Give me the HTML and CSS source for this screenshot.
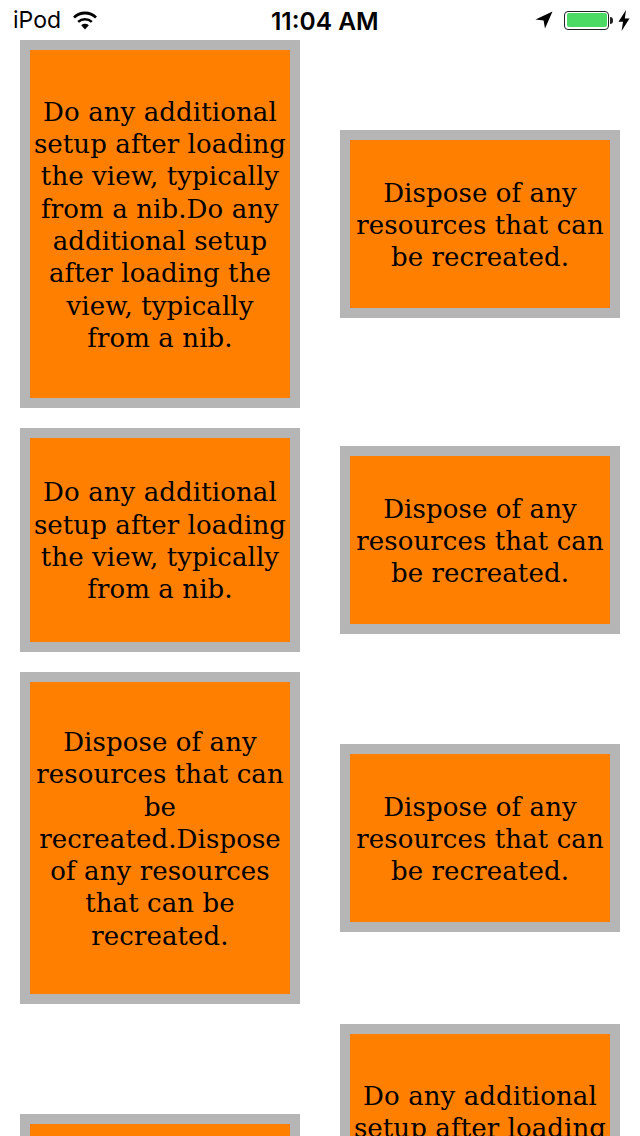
FILE: index.html
```html
<!DOCTYPE html>
<html lang="en">
<head>
    <meta charset="UTF-8">
    <title>Cards</title>
    <link rel="stylesheet" href="styles.css">
</head>
<body>
    <div class="status-bar">
        <div class="status-left">
            <span class="carrier">iPod</span>
            <svg class="wifi" width="26" height="19" viewBox="0 0 26 19">
                <path d="M13 18.5 L9.2 14.2 A5.6 5.6 0 0 1 16.8 14.2 Z" fill="#000"/>
                <path d="M6.2 10.9 A9.9 9.9 0 0 1 19.8 10.9" fill="none" stroke="#000" stroke-width="2.6"/>
                <path d="M2 6.4 A16 16 0 0 1 24 6.4" fill="none" stroke="#000" stroke-width="2.8"/>
            </svg>
        </div>
        <div class="status-time">11:04 AM</div>
        <div class="status-right">
            <svg class="location" width="18" height="18" viewBox="0 0 18 18">
                <path d="M17.5 0.5 L0.5 8.4 L8.6 9.4 L10 17.5 Z" fill="#000"/>
            </svg>
            <div class="battery"><div class="battery-level"></div></div>
            <div class="battery-tip"></div>
            <svg class="bolt" width="12" height="21" viewBox="0 0 12 21">
                <path d="M8 0 L0.5 11.8 H5 L3.6 21 L11.5 8.6 H6.8 Z" fill="#000"/>
            </svg>
        </div>
    </div>

    <div class="grid">
        <div class="card h-348">Do any additional<br>setup after loading<br>the view, typically<br>from a nib.Do any<br>additional setup<br>after loading the<br>view, typically<br>from a nib.</div>
        <div class="card h-168">Dispose of any<br>resources that can<br>be recreated.</div>

        <div class="card h-204">Do any additional<br>setup after loading<br>the view, typically<br>from a nib.</div>
        <div class="card h-168">Dispose of any<br>resources that can<br>be recreated.</div>

        <div class="card h-312">Dispose of any<br>resources that can<br>be<br>recreated.Dispose<br>of any resources<br>that can be<br>recreated.</div>
        <div class="card h-168">Dispose of any<br>resources that can<br>be recreated.</div>

        <div class="card h-168">Dispose of any<br>resources that can<br>be recreated.</div>
        <div class="card h-348">Do any additional<br>setup after loading<br>the view, typically<br>from a nib.Do any<br>additional setup<br>after loading the<br>view, typically<br>from a nib.</div>
    </div>
</body>
</html>
```

FILE: styles.css
```css
html, body {
    margin: 0;
    padding: 0;
    height: 1136px;
    overflow: hidden;
    background-color: white;
}
.status-bar {
    height: 40px;
    display: flex;
    align-items: center;
    justify-content: space-between;
    position: relative;
    padding: 0 10px 0 13px;
    box-sizing: border-box;
    font-family: Inter, "Liberation Sans", sans-serif;
    color: black;
}
.status-left {
    display: flex;
    align-items: center;
    gap: 11px;
}
.carrier {
    font-size: 23px;
}
.status-time {
    position: absolute;
    left: 271px;
    top: 7px;
    font-size: 24.5px;
    font-weight: 600;
    line-height: 28px;
}
.status-right {
    display: flex;
    align-items: center;
}
.location {
    margin-right: 11px;
}
.battery {
    width: 45px;
    height: 19px;
    box-sizing: border-box;
    border: 1.5px solid #222;
    border-radius: 4px;
    padding: 1.5px;
}
.battery-level {
    height: 100%;
    background-color: #4cd964;
    border-radius: 2px;
}
.battery-tip {
    width: 3px;
    height: 7px;
    margin-left: 1px;
    background-color: #222;
    border-radius: 0 3px 3px 0;
}
.bolt {
    margin-left: 5px;
}
.grid {
    display: grid;
    grid-template-columns: 280px 280px;
    column-gap: 40px;
    row-gap: 20px;
    padding: 0 20px;
    align-items: center;
}
.card {
    display: flex;
    align-items: center;
    justify-content: center;
    text-align: center;
    box-sizing: border-box;
    padding-top: 2px;
    border: 10px solid #b5b5b5;
    background-color: #ff7f00;
    color: black;
    font-family: "DejaVu Serif", serif;
    font-size: 26px;
    letter-spacing: 0.1px;
    line-height: 32.3px;
}
.h-168 { height: 188px; }
.h-204 { height: 224px; }
.h-312 { height: 332px; }
.h-348 { height: 368px; }
```
